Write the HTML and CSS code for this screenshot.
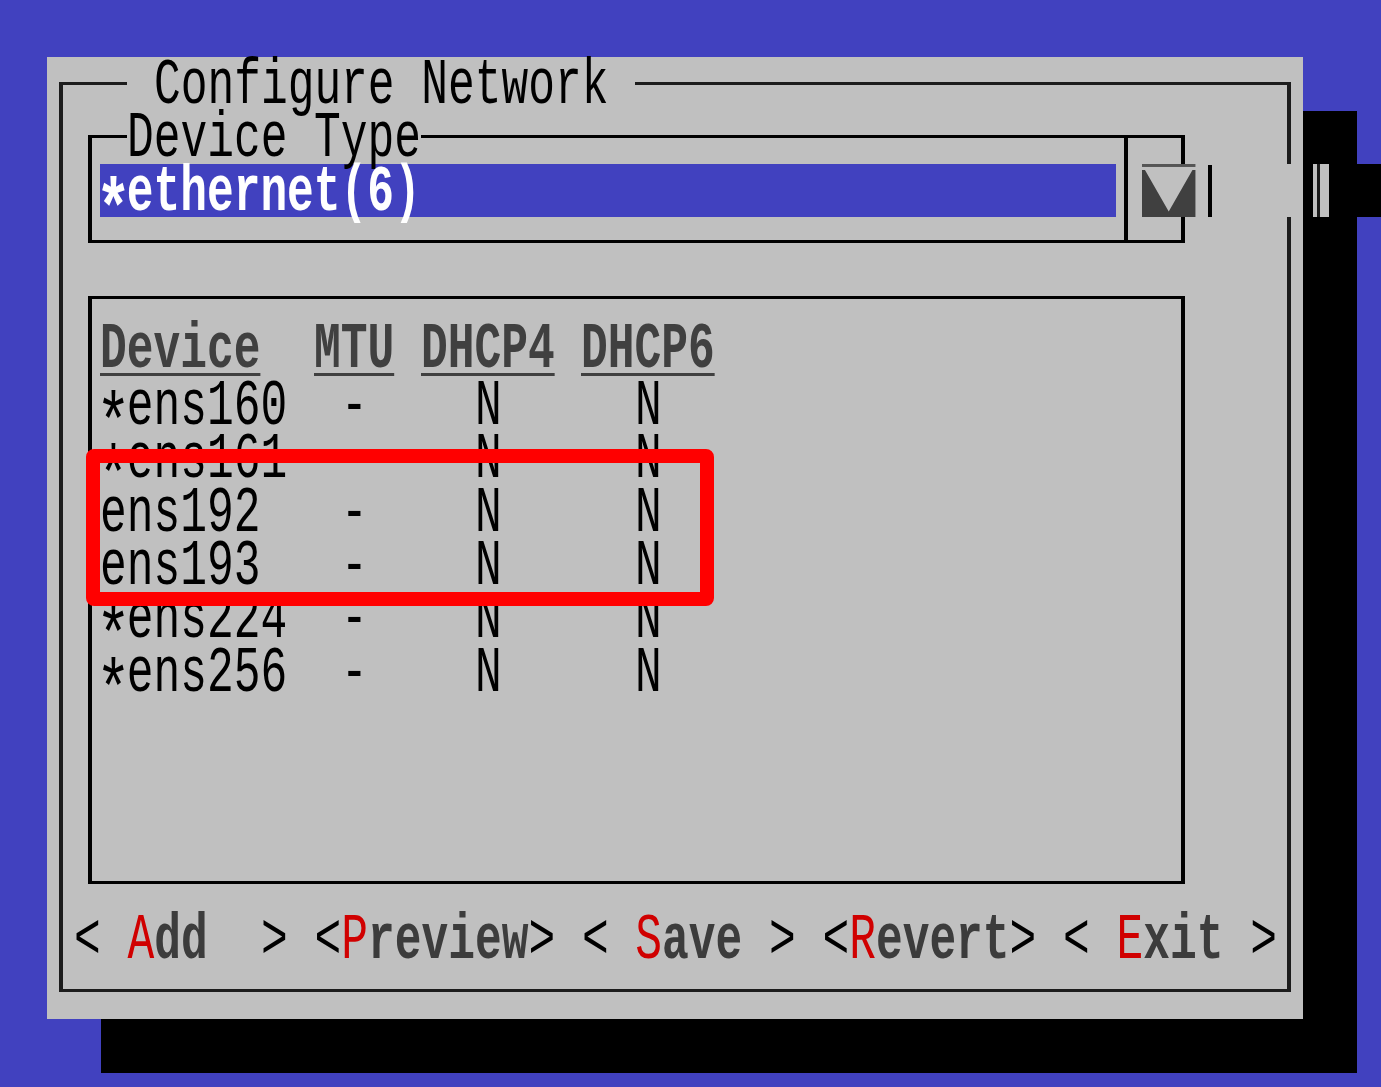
FILE: index.html
```html
<!DOCTYPE html>
<html>
<head>
<meta charset="utf-8">
<link rel="stylesheet" href="styles.css">
</head>
<body>
<div class="screen">
  <div class="panel">
    <div class="frame"></div>
    <div class="title"><span class="t">Configure Network</span></div>

    <div class="dtbox"><div class="dtside"></div></div>
    <div class="dtlabel"><span class="t">Device Type</span></div>
    <div class="sel"><span class="t"><span class="ast">*</span>ethernet(6)</span></div>
    <div class="arrow">
      <svg viewBox="0 0 54 54" preserveAspectRatio="none">
        <rect x="0" y="0" width="54" height="3" fill="#555"/>
        <path d="M0 6H54V54H0Z M3 6L27 48L51 6Z" fill="#404040" fill-rule="evenodd"/>
      </svg>
    </div>
    <div class="vbar"></div>
    <div class="gapfix"></div>

    <div class="tblbox"></div>

    <div class="trow r5">
      <span class="t h cA">Device</span>
      <span class="t h cB">MTU</span>
      <span class="t h cC">DHCP4</span>
      <span class="t h cD">DHCP6</span>
    </div>
    <div class="trow r6">
      <span class="t cA"><span class="ast">*</span>ens160</span><span class="t cB2">-</span><span class="t cC2">N</span><span class="t cD2">N</span>
    </div>
    <div class="trow r7">
      <span class="t cA"><span class="ast">*</span>ens161</span><span class="t cB2">-</span><span class="t cC2">N</span><span class="t cD2">N</span>
    </div>
    <div class="trow r8">
      <span class="t cA">ens192</span><span class="t cB2">-</span><span class="t cC2">N</span><span class="t cD2">N</span>
    </div>
    <div class="trow r9">
      <span class="t cA">ens193</span><span class="t cB2">-</span><span class="t cC2">N</span><span class="t cD2">N</span>
    </div>
    <div class="trow r10">
      <span class="t cA"><span class="ast">*</span>ens224</span><span class="t cB2">-</span><span class="t cC2">N</span><span class="t cD2">N</span>
    </div>
    <div class="trow r11">
      <span class="t cA"><span class="ast">*</span>ens256</span><span class="t cB2">-</span><span class="t cC2">N</span><span class="t cD2">N</span>
    </div>

    <div class="buttons"><span class="t">&lt; <span class="lbl"><span class="hot">A</span>dd</span>  &gt; &lt;<span class="lbl"><span class="hot">P</span>review</span>&gt; &lt; <span class="lbl"><span class="hot">S</span>ave</span> &gt; &lt;<span class="lbl"><span class="hot">R</span>evert</span>&gt; &lt; <span class="lbl"><span class="hot">E</span>xit</span> &gt;</span></div>

    <div class="spill"></div>
    <div class="mark"></div>
  </div>
</div>
</body>
</html>
```
FILE: styles.css
```css
html, body {
  margin: 0;
  padding: 0;
  background: #4141bf;
}

.screen {
  width: 1381px;
  height: 1087px;
  overflow: hidden;
  background: #4141bf;
  padding: 57px 0 0 47px;
  box-sizing: border-box;
}

.panel {
  position: relative;
  display: grid;
  grid-template-columns: repeat(47, 26.72px);
  grid-template-rows: repeat(18, 53.44px);
  width: 1255.84px;
  background: #c0c0c0;
  box-shadow: 54px 54px 0 #000;
  font-family: "Liberation Mono", "DejaVu Sans Mono", monospace;
  font-size: 64px;
  line-height: 53.44px;
  color: #000;
}

.t {
  display: block;
  white-space: pre;
  transform-origin: 0 0;
  transform: translateY(3px) scaleX(0.696);
}

.ast {
  display: inline-block;
  transform-origin: 50% 30%;
  transform: translateY(17px) scale(1.3, 1.25);
}

/* outer frame */
.frame {
  grid-column: 1 / 48;
  grid-row: 1 / 19;
  margin: 25px 11.3px 27px 11.5px;
  border-style: solid;
  border-color: #1c1c1c;
  border-width: 3px 4px;
}

.title {
  grid-column: 4 / 23;
  grid-row: 1;
  background: #c0c0c0;
  padding-left: 26.72px;
}

/* device type combo */
.dtbox {
  grid-column: 2 / 44;
  grid-row: 2 / 5;
  margin: 24.6px 11px 27.8px 13.8px;
  border-style: solid;
  border-color: #000;
  border-width: 3px 4px;
  display: flex;
  justify-content: flex-end;
}

.dtside {
  width: 53px;
  border-left: 4px solid #000;
}

.dtlabel {
  grid-column: 4 / 15;
  grid-row: 2;
  background: #c0c0c0;
}

.sel {
  grid-column: 3 / 41;
  grid-row: 3;
  background: #4141bf;
  color: #fff;
  font-weight: 700;
}

.arrow {
  grid-column: 42 / 44;
  grid-row: 3;
  background: #c0c0c0;
}

.arrow svg {
  display: block;
  width: 100%;
  height: 100%;
}

.vbar {
  grid-column: 44;
  grid-row: 3;
  margin: 1px 0 0 12px;
  border-left: 4px solid #000;
}

.gapfix {
  grid-column: 47;
  grid-row: 3;
  background: #c0c0c0;
}

/* device table */
.tblbox {
  grid-column: 2 / 44;
  grid-row: 5 / 17;
  margin: 25.2px 11px 28px 13.8px;
  border-style: solid;
  border-color: #000;
  border-width: 3px 4px;
}

.trow {
  grid-column: 3 / 43;
  display: grid;
  grid-template-columns: repeat(40, 26.72px);
  grid-template-rows: 53.44px;
}

.r5 { grid-row: 6; }
.r6 { grid-row: 7; }
.r7 { grid-row: 8; }
.r8 { grid-row: 9; }
.r9 { grid-row: 10; }
.r10 { grid-row: 11; }
.r11 { grid-row: 12; }

.cA { grid-column: 1 / span 8; grid-row: 1; }
.cB { grid-column: 9 / span 3; grid-row: 1; }
.cB2 { grid-column: 10 / span 2; grid-row: 1; }
.cC { grid-column: 13 / span 5; grid-row: 1; }
.cC2 { grid-column: 15 / span 2; grid-row: 1; }
.cD { grid-column: 19 / span 5; grid-row: 1; }
.cD2 { grid-column: 21 / span 2; grid-row: 1; }

.h {
  font-weight: 700;
  color: #404040;
  text-decoration: underline;
  text-decoration-thickness: 3px;
  text-underline-offset: 6px;
  transform: translateY(0) scaleX(0.696);
}

/* buttons */
.buttons {
  grid-column: 2 / 47;
  grid-row: 17;
}

.lbl {
  color: #3c3c3c;
  font-weight: 700;
}

.hot {
  color: #d00000;
  font-weight: 400;
}

/* artifacts of the wide arrow glyph spilling past the dialog */
.spill {
  position: absolute;
  left: 100%;
  top: 106.88px;
  width: 80px;
  height: 53.44px;
  background: linear-gradient(to right,
    #000 0 10px,
    #c0c0c0 10px 14px,
    #1a1a1a 14px 17.5px,
    #c0c0c0 17.5px 26.5px,
    #000 26.5px);
}

/* red highlight annotation */
.mark {
  position: absolute;
  left: 39px;
  top: 392px;
  width: 628px;
  height: 157px;
  border: 14px solid #ff0000;
  border-radius: 8px;
  box-sizing: border-box;
}
```
